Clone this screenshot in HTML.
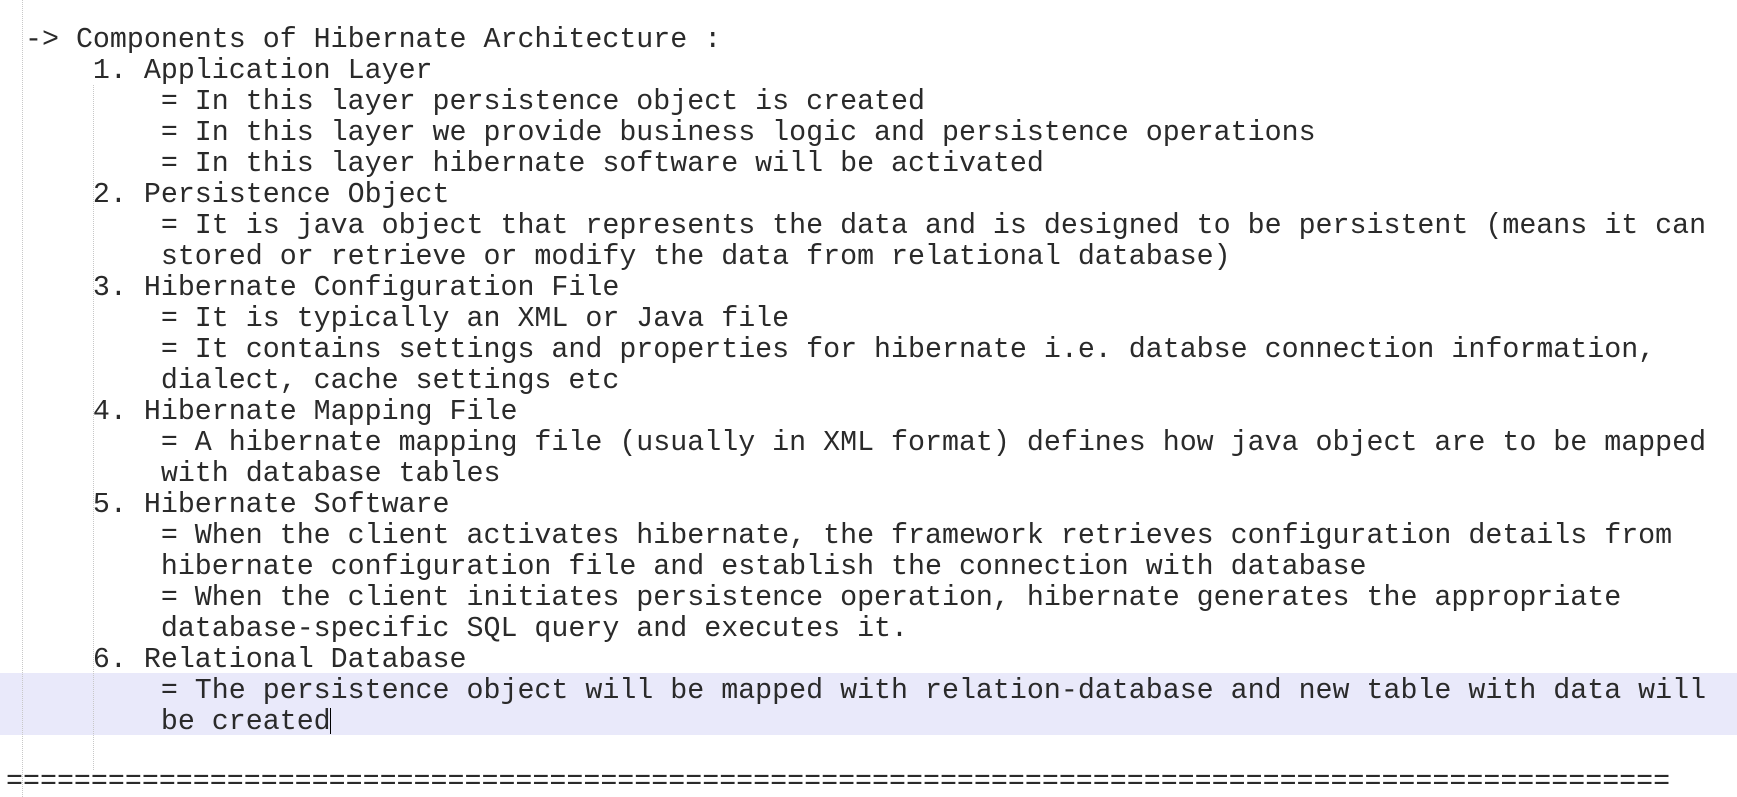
<!DOCTYPE html>
<html><head><meta charset="utf-8"><style>
html,body{margin:0;padding:0;background:#fff;width:1737px;height:797px;overflow:hidden;position:relative}
pre{position:absolute;left:25px;top:25px;margin:0;font-family:"Liberation Mono",monospace;font-size:28.3px;line-height:31px;color:#2a2a2a;z-index:2}
.hl{position:absolute;left:0;top:673px;width:1737px;height:62px;background:#e9e9fa;z-index:1}
.g{position:absolute;width:0;border-left:1px dotted #c8c8c8;z-index:1}
.eq{position:absolute;left:6px;top:767px;font-family:"Liberation Mono",monospace;font-size:28.3px;line-height:31px;color:#2a2a2a;white-space:pre;z-index:2}
.caret{position:absolute;left:330px;top:708px;width:1px;height:26px;background:#000;z-index:3}
</style></head><body>
<div class="hl"></div>
<div class="g" style="left:22px;top:0;height:797px"></div>
<div class="g" style="left:93px;top:85px;height:685px"></div>
<pre>-&gt; Components of Hibernate Architecture :
    1. Application Layer
        = In this layer persistence object is created
        = In this layer we provide business logic and persistence operations
        = In this layer hibernate software will be activated
    2. Persistence Object
        = It is java object that represents the data and is designed to be persistent (means it can
        stored or retrieve or modify the data from relational database)
    3. Hibernate Configuration File
        = It is typically an XML or Java file
        = It contains settings and properties for hibernate i.e. databse connection information,
        dialect, cache settings etc
    4. Hibernate Mapping File
        = A hibernate mapping file (usually in XML format) defines how java object are to be mapped
        with database tables
    5. Hibernate Software
        = When the client activates hibernate, the framework retrieves configuration details from
        hibernate configuration file and establish the connection with database
        = When the client initiates persistence operation, hibernate generates the appropriate
        database-specific SQL query and executes it.
    6. Relational Database
        = The persistence object will be mapped with relation-database and new table with data will
        be created</pre>
<div class="caret"></div>
<div class="eq">==================================================================================================</div>
</body></html>
